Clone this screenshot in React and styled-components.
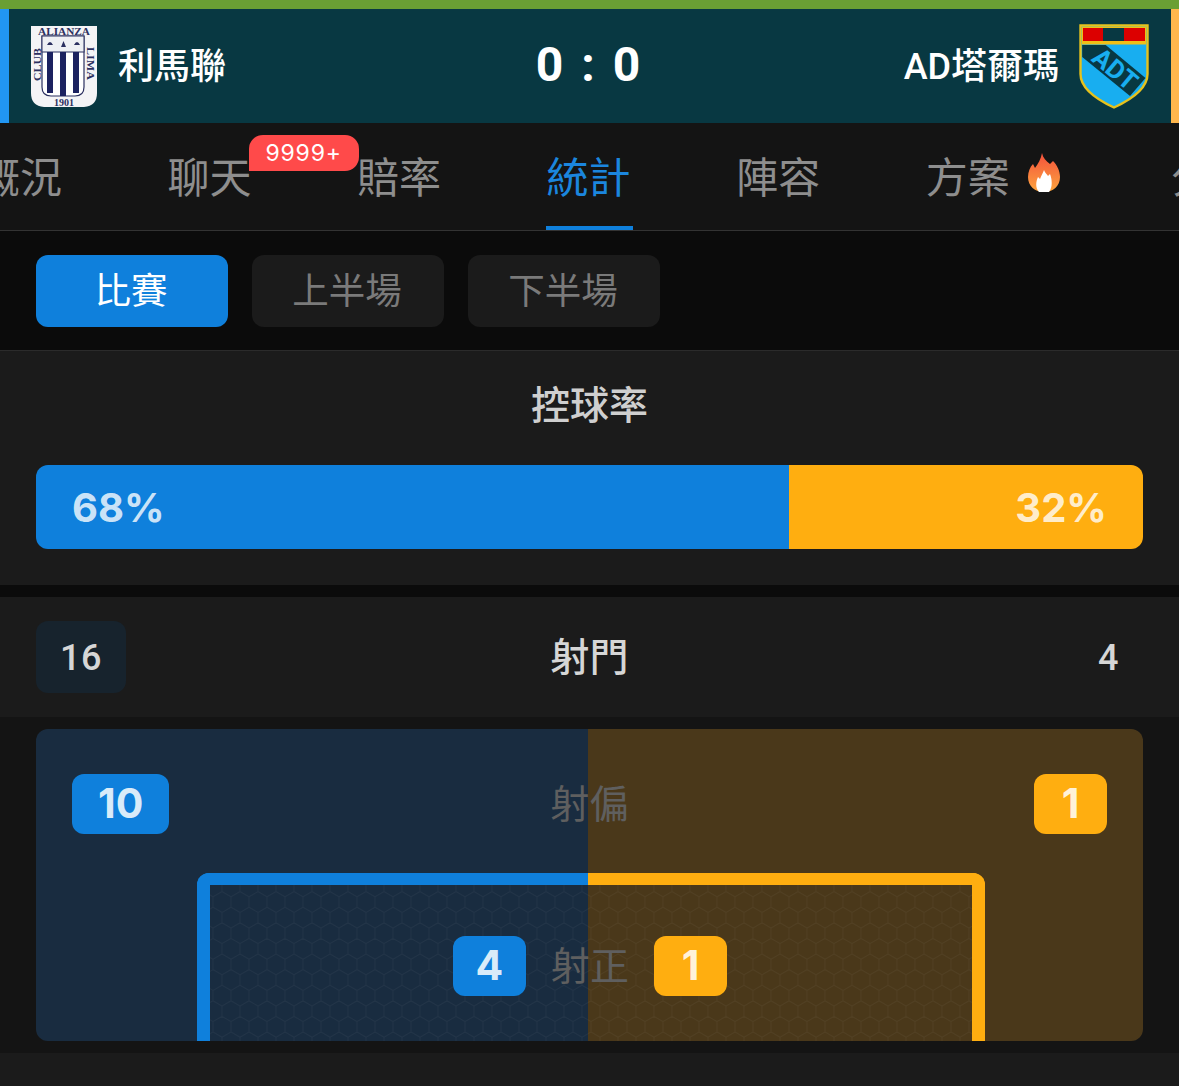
import React from 'react'
import styled, { createGlobalStyle } from 'styled-components'

const FONT = `Roboto, "Noto Sans CJK TC", "Noto Sans", sans-serif`
const NUM_FONT = `Inter, "Noto Sans", sans-serif`
const BLUE = '#0f80dc'
const ORANGE = '#ffae10'

const GlobalStyle = createGlobalStyle`
    html, body {
        margin: 0;
        padding: 0;
        background: #1b1b1b;
    }
    * {
        box-sizing: border-box;
    }
`

const Page = styled.div`
    width: 1179px;
    height: 1086px;
    overflow: hidden;
    font-family: ${FONT};
    background: #1b1b1b;
`

const TopStrip = styled.div`
    height: 9px;
    background: #6a9f34;
`

const ScoreBar = styled.div`
    height: 114px;
    display: flex;
    align-items: center;
    justify-content: space-between;
    background: #083842;
    border-left: 9px solid #2196f3;
    border-right: 8px solid #ffb74d;
    padding: 0 22px 0 21px;
`

const Team = styled.div`
    width: 400px;
    display: flex;
    align-items: center;
    justify-content: ${p => (p.$right ? 'flex-end' : 'flex-start')};
    gap: 20px;
    color: #fff;
    font-size: 36px;
    font-weight: 500;
`

const TeamName = styled.span`
    margin-bottom: 6px;
`

const Score = styled.div`
    margin-bottom: 4px;
    color: #fff;
    font-size: 48px;
    font-weight: 700;
    letter-spacing: 3px;
`

const Tabs = styled.div`
    height: 108px;
    display: flex;
    background: #141414;
    border-bottom: 1px solid #333;
    margin-left: -74.7px;
`

const Tab = styled.div`
    flex: none;
    display: flex;
    align-items: center;
    padding: 0 52.75px;
    font-size: 42px;
    color: ${p => (p.$active ? '#1b86de' : '#8e8e8e')};
`

const TabLabel = styled.span`
    position: relative;
    display: block;
    height: 107px;
    line-height: 111px;
`

const Underline = styled.i`
    position: absolute;
    left: -1px;
    right: -2px;
    bottom: 0;
    height: 4px;
    background: ${BLUE};
`

const Badge = styled.span`
    position: absolute;
    top: 12px;
    left: 81px;
    height: 36px;
    width: 110px;
    display: flex;
    align-items: center;
    justify-content: center;
    border-radius: 14px 14px 14px 0;
    background: #ff4a4a;
    color: #fff;
    font-family: ${NUM_FONT};
    font-size: 23px;
    letter-spacing: 0.8px;
`

const FlameIcon = styled.svg`
    margin: -8px 6px 0 18px;
`

const Filters = styled.div`
    height: 120px;
    display: flex;
    align-items: center;
    gap: 24px;
    padding: 0 36px;
    background: #0b0b0b;
    border-bottom: 1px solid #2b2b2b;
`

const FilterButton = styled.div`
    width: 192px;
    height: 72px;
    display: flex;
    align-items: center;
    justify-content: center;
    padding: 0 2px 4px 0;
    border-radius: 12px;
    font-size: 36.5px;
    background: ${p => (p.$active ? BLUE : '#1b1b1b')};
    color: ${p => (p.$active ? '#fff' : '#7a7a7a')};
`

const PossessionCard = styled.section`
    height: 234px;
    padding: 0 36px;
    background: #1b1b1b;
`

const CardTitle = styled.h2`
    margin: 0 0 12px;
    height: 102px;
    display: flex;
    align-items: center;
    justify-content: center;
    color: #cfcfcf;
    font-size: 39px;
    font-weight: 500;
`

const PercentBar = styled.div`
    height: 84px;
    display: flex;
    border-radius: 12px;
    overflow: hidden;
`

const PercentPart = styled.div`
    display: flex;
    align-items: center;
    justify-content: ${p => (p.$right ? 'flex-end' : 'flex-start')};
    padding: 0 36px;
    background: ${p => (p.$right ? ORANGE : BLUE)};
    color: rgba(255, 255, 255, 0.8);
    font-family: ${NUM_FONT};
    font-size: 40px;
    font-weight: 700;
`

const Gap = styled.div`
    height: 12px;
    background: #0b0b0b;
`

const ShotsRow = styled.div`
    height: 120px;
    display: grid;
    grid-template-columns: 1fr auto 1fr;
    align-items: center;
    padding: 0 36px;
    background: #1b1b1b;
`

const ShotsNum = styled.div`
    justify-self: ${p => (p.$lead ? 'start' : 'end')};
    height: 72px;
    padding: 2px 24px 0;
    display: flex;
    align-items: center;
    justify-content: center;
    border-radius: 12px;
    color: #d6d6d6;
    font-size: 36px;
    font-weight: 500;
    letter-spacing: 0.5px;
    background: ${p => (p.$lead ? '#17232d' : 'transparent')};
`

const ShotsTitle = styled.div`
    margin-bottom: 6px;
    color: #d6d6d6;
    font-size: 39px;
    font-weight: 500;
`

const PitchWrap = styled.div`
    height: 336px;
    padding: 12px 36px;
    background: #141414;
`

const Pitch = styled.div`
    position: relative;
    height: 312px;
    border-radius: 12px;
    overflow: hidden;
    background: linear-gradient(90deg, #192c40 552px, #4a381a 552px);
`

const OffRow = styled.div`
    height: 150px;
    display: grid;
    grid-template-columns: 1fr auto 1fr;
    align-items: center;
    padding: 0 36px;
`

const StatChip = styled.div`
    justify-self: ${p => (p.$right ? 'end' : 'start')};
    min-width: 73px;
    height: 60px;
    padding: 0 26px 3px;
    display: flex;
    align-items: center;
    justify-content: center;
    border-radius: 12px;
    background: ${p => (p.$right ? ORANGE : BLUE)};
    color: rgba(255, 255, 255, 0.85);
    font-family: ${NUM_FONT};
    font-size: 41px;
    font-weight: 700;
`

const StatLabel = styled.div`
    margin-bottom: 6px;
    color: #5f5f5f;
    font-size: 39px;
`

const Goal = styled.div`
    position: absolute;
    left: 161px;
    top: 144px;
    width: 788px;
    height: 168px;
    border-radius: 12px 12px 0 0;
    overflow: hidden;
    display: flex;
`

const GoalSide = styled.div`
    flex: ${p => (p.$right ? '1' : '0 0 391px')};
    height: 100%;
    border-style: solid;
    border-color: ${p => (p.$right ? ORANGE : BLUE)};
    border-width: ${p => (p.$right ? '12px 13px 0 0' : '12px 0 0 13px')};
`

const HexLayer = styled.svg`
    position: absolute;
    left: 13px;
    top: 12px;
    width: 762px;
    height: 156px;
`

const OnTarget = styled.div`
    position: absolute;
    left: 0;
    right: 2px;
    top: 63px;
    display: flex;
    align-items: center;
    justify-content: center;
    gap: 25px;
    transform: translateY(-1px);
`

const GoalChip = styled(StatChip)`
    width: 73px;
    padding: 0 0 3px;
`

const AllianzaCrest = () => (
    <svg width="68" height="83" viewBox="0 0 68 83">
        <path d="M1 1H67V68Q67 81 54 82H14Q1 81 1 68Z" fill="#f4f4f6" />
        <path d="M12 11H54V62Q54 71 45 71H21Q12 71 12 62Z" fill="#fff" stroke="#2b3060" strokeWidth="1.2" />
        <rect x="12" y="11" width="42" height="16" fill="#eef0f4" stroke="#2b3060" strokeWidth="1" />
        <path d="M17 20q3-6 6 0zM31 22l2.5-6 2.5 6zM44 20q3-6 6 0z" fill="#2b3060" />
        <rect x="17" y="27" width="6" height="41" fill="#1c2260" />
        <rect x="30" y="27" width="6" height="44" fill="#1c2260" />
        <rect x="43" y="27" width="6" height="41" fill="#1c2260" />
        <text x="34" y="9.5" textAnchor="middle" fontFamily="Liberation Serif, serif" fontSize="9.5" fontWeight="700" textLength="52" lengthAdjust="spacingAndGlyphs" fill="#2b3060">ALIANZA</text>
        <text x="34" y="80.5" textAnchor="middle" fontFamily="Liberation Serif, serif" fontSize="10" fontWeight="700" fill="#2b3060">1901</text>
        <text transform="translate(10.5 56) rotate(-90)" fontFamily="Liberation Serif, serif" fontSize="11" fontWeight="700" textLength="33" lengthAdjust="spacingAndGlyphs" fill="#2b3060">CLUB</text>
        <text transform="translate(56.5 22) rotate(90)" fontFamily="Liberation Serif, serif" fontSize="11" fontWeight="700" textLength="33" lengthAdjust="spacingAndGlyphs" fill="#2b3060">LIMA</text>
    </svg>
)

const AdtCrest = () => (
    <svg width="70" height="85" viewBox="0 0 70 85">
        <path d="M1.5 1.5H68.5V50Q68.5 68 35 83.5Q1.5 68 1.5 50Z" fill="#18aef0" stroke="#e6c21c" strokeWidth="2.4" />
        <rect x="3" y="3" width="64" height="17.5" fill="#f0bf16" />
        <rect x="4" y="4" width="20" height="13" fill="#dc0000" />
        <rect x="24" y="4" width="21" height="13" fill="#083842" />
        <rect x="45" y="4" width="21" height="13" fill="#dc0000" />
        <path d="M3.2 21H26.7L66.5 54L51 72L3.2 33Z" fill="#083842" />
        <text transform="translate(36 45) rotate(40)" y="9" textAnchor="middle" fontFamily="Roboto, sans-serif" fontSize="26" fontWeight="700" fill="#18aef0">ADT</text>
    </svg>
)

const Flame = () => (
    <FlameIcon width="32" height="39" viewBox="0 0 32 39">
        <defs>
            <linearGradient id="flameFill" x1="0" y1="0" x2="0" y2="1">
                <stop offset="0" stopColor="#f4503c" />
                <stop offset="1" stopColor="#fca53e" />
            </linearGradient>
        </defs>
        <path d="M14 0C15 5 18 8 22 11L25 8C29 12 32 18 32 24C32 33 25 39 16 39C7 39 0 33 0 24C0 19 2 14 5 11L7 15C10 11 13 6 14 0Z" fill="url(#flameFill)" />
        <path d="M16 17C17 20 19 21 20 23L22 21C24 26 25 34 21 39H11C7 35 8 28 10 24L12 26C13 23 15 20 16 17Z" fill="#fff" />
    </FlameIcon>
)

const Honeycomb = () => {
    const cells = []
    for (let row = 0; row < 11; row++) {
        for (let col = 0; col < 44; col++) {
            const x = col * 18 + (row % 2 ? 9 : 0) - 6
            const y = row * 15.6 - 9
            cells.push(`M${x} ${y + 5.2}L${x + 9} ${y}L${x + 18} ${y + 5.2}V${y + 15.6}L${x + 9} ${y + 20.8}L${x} ${y + 15.6}Z`)
        }
    }
    return (
        <HexLayer viewBox="0 0 762 156">
            <path d={cells.join('')} fill="none" stroke="rgba(255,255,255,0.04)" strokeWidth="1.2" />
        </HexLayer>
    )
}

const tabs = [
    { name: '概況' },
    { name: '聊天', badge: '9999+' },
    { name: '賠率' },
    { name: '統計', active: true },
    { name: '陣容' },
    { name: '方案', hot: true },
    { name: '分析' },
]

const App = () => {
    const showTabs = tabs.map((tab) => {
        return (
            <Tab key={tab.name} $active={tab.active}>
                <TabLabel>
                    {tab.name}
                    {tab.active && <Underline />}
                    {tab.badge && <Badge>{tab.badge}</Badge>}
                </TabLabel>
                {tab.hot && <Flame />}
            </Tab>
        )
    })

    return (
        <Page>
            <GlobalStyle />
            <TopStrip />
            <ScoreBar>
                <Team>
                    <AllianzaCrest />
                    <TeamName>利馬聯</TeamName>
                </Team>
                <Score>0 : 0</Score>
                <Team $right>
                    <TeamName>AD塔爾瑪</TeamName>
                    <AdtCrest />
                </Team>
            </ScoreBar>
            <Tabs>{showTabs}</Tabs>
            <Filters>
                <FilterButton $active>比賽</FilterButton>
                <FilterButton>上半場</FilterButton>
                <FilterButton>下半場</FilterButton>
            </Filters>
            <PossessionCard>
                <CardTitle>控球率</CardTitle>
                <PercentBar>
                    <PercentPart style={{ width: '68%' }}>68%</PercentPart>
                    <PercentPart $right style={{ width: '32%' }}>32%</PercentPart>
                </PercentBar>
            </PossessionCard>
            <Gap />
            <ShotsRow>
                <ShotsNum $lead>16</ShotsNum>
                <ShotsTitle>射門</ShotsTitle>
                <ShotsNum>4</ShotsNum>
            </ShotsRow>
            <PitchWrap>
                <Pitch>
                    <OffRow>
                        <StatChip>10</StatChip>
                        <StatLabel>射偏</StatLabel>
                        <StatChip $right>1</StatChip>
                    </OffRow>
                    <Goal>
                        <GoalSide />
                        <GoalSide $right />
                        <Honeycomb />
                        <OnTarget>
                            <GoalChip>4</GoalChip>
                            <StatLabel>射正</StatLabel>
                            <GoalChip $right>1</GoalChip>
                        </OnTarget>
                    </Goal>
                </Pitch>
            </PitchWrap>
        </Page>
    )
}

export default App
